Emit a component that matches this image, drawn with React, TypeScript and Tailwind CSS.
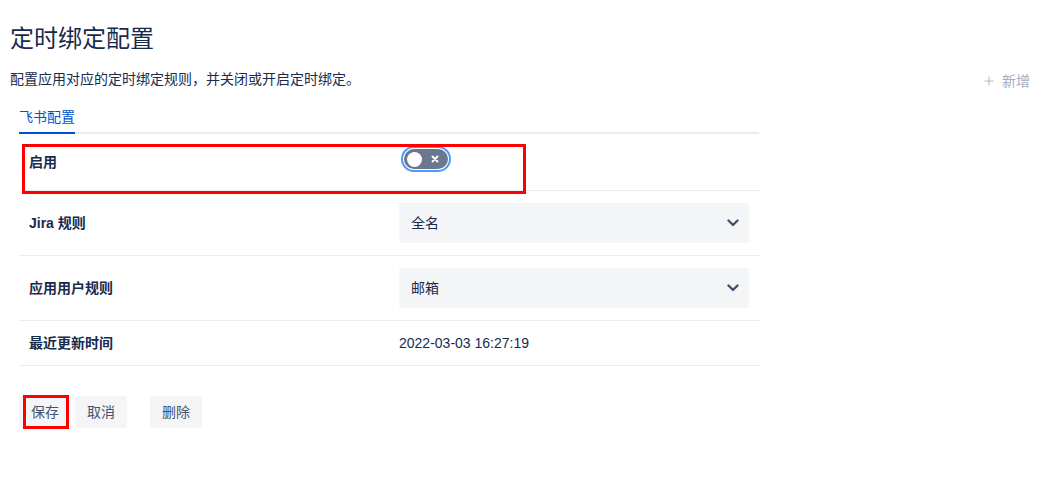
import { Plus } from 'lucide-react'

const font = { fontFamily: '"Liberation Sans", "Noto Sans CJK SC", sans-serif' }

function Chevron() {
  return (
    <svg width="12" height="8" viewBox="0 0 12 8" fill="none">
      <path d="M1.5 1.5 L6 6 L10.5 1.5" stroke="#42526e" strokeWidth="2.4" strokeLinecap="round" strokeLinejoin="round" />
    </svg>
  )
}

function Toggle() {
  return (
    <span className="ml-[2px] inline-flex h-[26px] w-[50px] rounded-full border-2 border-[#4c9aff] bg-white p-[1px]">
      <span className="flex h-full w-full items-center justify-between rounded-full bg-[#6b778c] pl-[3px] pr-[9px]">
        <span className="h-[15px] w-[15px] rounded-full bg-white" />
        <svg width="8" height="8" viewBox="0 0 8 8">
          <path d="M1.5 1.5 L6.5 6.5 M6.5 1.5 L1.5 6.5" stroke="white" strokeWidth="2" strokeLinecap="round" />
        </svg>
      </span>
    </span>
  )
}

function Select({ value }: { value: string }) {
  return (
    <div className="flex h-10 items-center justify-between rounded-[3px] bg-[#f4f5f7] pl-3 pr-[10px] text-sm leading-5 text-[#172b4d]">
      <span>{value}</span>
      <Chevron />
    </div>
  )
}

const rows = [
  { label: 'Jira 规则', value: <Select value="全名" /> },
  { label: '应用用户规则', value: <Select value="邮箱" /> },
  { label: '最近更新时间', value: <div className="text-sm leading-5 text-[#172b4d]">2022-03-03 16:27:19</div> },
]

export default function App() {
  return (
    <div className="min-h-screen bg-white pl-[10px] pt-[23px]" style={font}>
      <h1 className="text-[24px] leading-8 text-[#172b4d]">定时绑定配置</h1>

      <div className="mt-[14px] flex h-5 items-center justify-between pr-[31px] text-sm leading-5">
        <p className="text-[#172b4d]">配置应用对应的定时绑定规则，并关闭或开启定时绑定。</p>
        <button className="flex translate-y-[2px] items-center gap-[6px] text-[#a5adba]">
          <Plus size={14} strokeWidth={1.5} />
          新增
        </button>
      </div>

      <div className="ml-[9px] mt-[18px] w-[740px] text-sm leading-5">
        <div className="flex border-b-2 border-[#ebecf0]">
          <div className="-mb-[2px] border-b-2 border-[#0052cc] pb-[5px] text-[#0052cc]">飞书配置</div>
        </div>

        <div className="relative flex border-b border-[#ebecf0] py-3">
          <div className="w-[370px] px-[10px] font-bold leading-8 text-[#172b4d]">启用</div>
          <div className="h-8 w-[370px] px-[10px] leading-none">
            <Toggle />
          </div>
          <div className="pointer-events-none absolute left-[3px] top-[10px] h-[50px] w-[504px] border-[3px] border-[#ff0000]" />
        </div>

        {rows.map((r) => (
          <div key={r.label} className="flex items-center border-b border-[#ebecf0] py-3">
            <div className="w-[370px] px-[10px] font-bold text-[#172b4d]">{r.label}</div>
            <div className="w-[370px] px-[10px]">{r.value}</div>
          </div>
        ))}

        <div className="mt-[30px] flex items-center">
          <div className="relative">
            <button className="h-8 rounded-[3px] bg-[#f4f5f7] px-3 text-[#42526e]">保存</button>
            <div className="pointer-events-none absolute -top-[1px] left-[4px] h-[34px] w-[46px] border-[3px] border-[#ff0000]" />
          </div>
          <button className="ml-1 h-8 rounded-[3px] bg-[#f4f5f7] px-3 text-[#42526e]">取消</button>
          <button className="ml-[23px] h-8 rounded-[3px] bg-[#f4f5f7] px-3 text-[#42526e]">删除</button>
        </div>
      </div>
    </div>
  )
}
